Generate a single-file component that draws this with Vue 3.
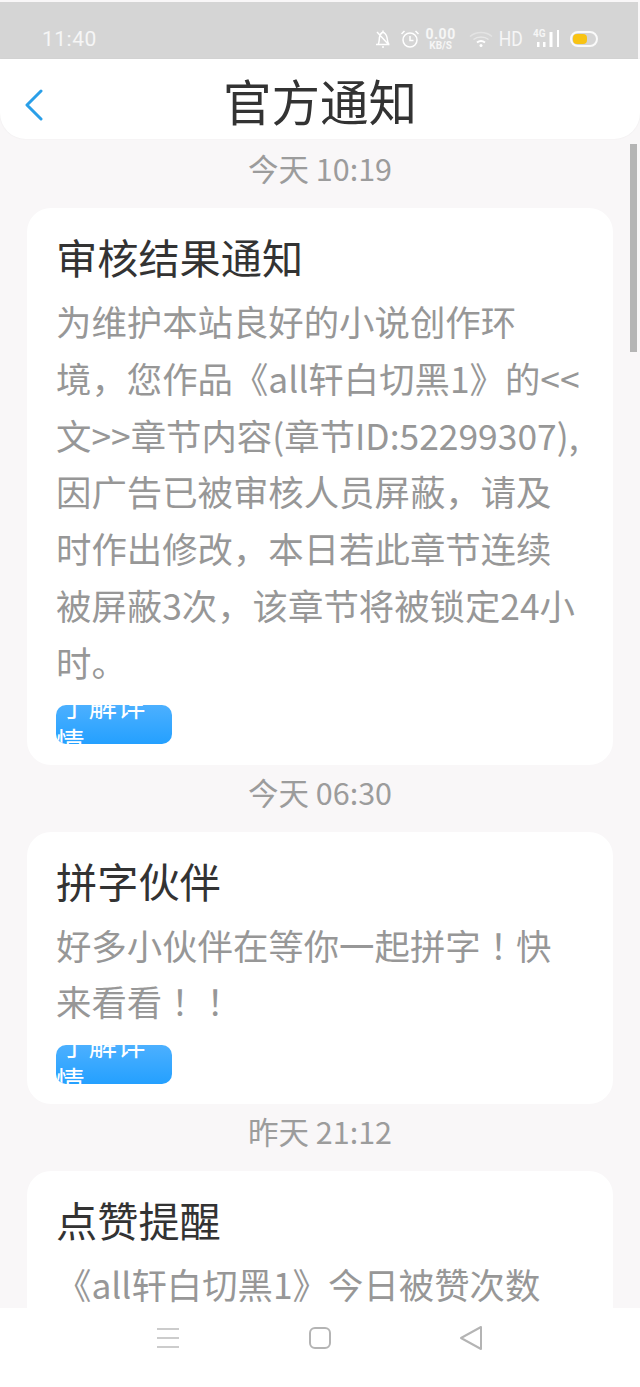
<script setup>
const notices = [
  {
    time: '今天 10:19',
    title: '审核结果通知',
    lines: ['为维护本站良好的小说创作环', '境，您作品《all轩白切黑1》的<<', '文>>章节内容(章节ID:52299307),', '因广告已被审核人员屏蔽，请及', '时作出修改，本日若此章节连续', '被屏蔽3次，该章节将被锁定24小', '时。'],
    button: true,
    centeredMarks: false
  },
  {
    time: '今天 06:30',
    title: '拼字伙伴',
    lines: ['好多小伙伴在等你一起拼字！快', '来看看！！'],
    button: true,
    centeredMarks: true
  },
  {
    time: '昨天 21:12',
    title: '点赞提醒',
    lines: ['《all轩白切黑1》今日被赞次数', '已达到上限'],
    button: false,
    centeredMarks: false
  }
]
</script>

<template>
  <div class="phone">
    <div class="status">
      <span class="clock">11:40</span>
      <div class="status-icons">
        <svg class="bell" width="18" height="20" viewBox="0 0 18 20" fill="none" stroke="#fff" stroke-width="1.500">
          <path d="M2 15.500h13.500M4 15.500c1.500-2 1-4.500 1.500-7C6 5 8 3.500 9 3.500s3.500 1.500 4 5c.3 2.500.5 5 2 7M3 3l12 13" />
          <path d="M9 1.500v2M8 18h2" />
        </svg>
        <svg width="20" height="20" viewBox="0 0 20 20" fill="none" stroke="#fff" stroke-width="1.500">
          <circle cx="10" cy="11" r="7" />
          <path d="M10 7v4.500h3.500M1.500 5l3-3M18.500 5l-3-3" />
        </svg>
        <div class="speed"><b>0.00</b><i>KB/S</i></div>
        <svg class="wifi" width="24" height="18" viewBox="0 0 24 18" fill="none" stroke="#ececec">
          <path d="M1 6.500C7 1.200 17 1.200 23 6.500" stroke-width="1.500" opacity=".6" />
          <path d="M4.500 9.500c4-3.500 11-3.500 15 0" stroke-width="1.500" opacity=".75" />
          <path d="M8 12.500c2.300-1.700 5.700-1.700 8 0" stroke="#fff" stroke-width="2" />
          <circle cx="12" cy="15.500" r="1.500" fill="#fff" stroke="none" />
        </svg>
        <span class="hd">HD</span>
        <div class="signal">
          <span class="g4">4G</span>
          <svg width="26" height="20" viewBox="0 0 26 20" fill="#fff">
            <rect x="4" y="13" width="2.500" height="5" />
            <rect x="10" y="13" width="2.500" height="5" />
            <rect x="16.500" y="3" width="3" height="15" />
            <rect x="24" y="1" width="2.500" height="17" />
          </svg>
        </div>
        <div class="battery"><span></span></div>
      </div>
    </div>

    <header class="topbar">
      <svg class="back" width="20" height="32" viewBox="0 0 20 32" fill="none" stroke="#2a9fe8" stroke-width="3" stroke-linecap="round" stroke-linejoin="round">
        <path d="M17 2 3 16l14 14" />
      </svg>
      <h1>官方通知</h1>
    </header>

    <main class="list">
      <section v-for="n in notices" :key="n.time" class="notice">
        <div class="time">{{ n.time }}</div>
        <article class="card">
          <h2>{{ n.title }}</h2>
          <p v-for="line in n.lines" :key="line" :class="{ marks: n.centeredMarks }">{{ line }}</p>
          <div v-if="n.button" class="detail"><div class="detail-text">了解详情</div></div>
        </article>
      </section>
    </main>

    <div class="scrollbar"></div>

    <nav class="navbar">
      <svg width="22" height="22" viewBox="0 0 22 22" fill="none" stroke="#bcbcbc" stroke-width="1.500">
        <path d="M0 2h22M0 11h22M0 20h22" />
      </svg>
      <svg width="22" height="22" viewBox="0 0 22 22" fill="none" stroke="#b4b4b4" stroke-width="2">
        <rect x="1" y="1" width="20" height="20" rx="5" />
      </svg>
      <svg width="22" height="26" viewBox="0 0 22 26" fill="none" stroke="#b4b4b4" stroke-width="2" stroke-linejoin="round">
        <path d="M21 2v22L1 13z" />
      </svg>
    </nav>
  </div>
</template>

<style>
html, body { margin: 0; background: #f9f7f8; }
</style>

<style scoped>
.phone {
  position: relative;
  width: 640px;
  height: 1387px;
  overflow: hidden;
  background: #f9f7f8;
  font-family: "Noto Sans CJK SC", sans-serif;
}
.status {
  height: 57px;
  margin-top: 2px;
  margin-right: 2px;
  background: #d5d5d5;
  display: flex;
  align-items: center;
  justify-content: space-between;
  box-sizing: border-box;
  padding: 17px 40px 0 42px;
  color: #f6f6f6;
}
.clock { font: 21px Roboto, sans-serif; letter-spacing: .5px; }
.status-icons { display: flex; align-items: center; gap: 5px; }
.bell { margin-right: 3px; }
.speed { display: flex; flex-direction: column; align-items: center; width: 28px; margin: 0 9px 0 2px; font-family: Roboto, sans-serif; line-height: 1; }
.speed b { font-size: 14px; letter-spacing: .5px; }
.speed i { font-size: 10px; font-style: normal; font-weight: 700; }
.hd { font: 20px Roboto, sans-serif; transform: scaleX(.88); margin: 0 1px 0 -1px; }
.signal { position: relative; width: 28px; height: 20px; margin-left: 3px; }
.signal svg { position: absolute; left: 0; top: 0; }
.g4 { position: absolute; left: 0; top: -1px; font: 700 10px Roboto, sans-serif; }
.battery { width: 28px; height: 16px; border: 2px solid #fafafa; border-radius: 8px; margin-left: 4px; padding: 1px; box-sizing: border-box; }
.battery span { display: block; width: 14px; height: 100%; border-radius: 4px; background: #f8c313; }
.topbar {
  height: 80px;
  background: #fff;
  border-radius: 0 0 26px 26px;
  display: flex;
  align-items: center;
  justify-content: center;
  position: relative;
  box-shadow: 0 0 2px rgba(0, 0, 0, .06);
  box-sizing: border-box;
  padding-top: 3px;
}
.topbar h1 { margin: 0; font-size: 48.500px; font-weight: 400; color: #333; line-height: 1; }
.back { position: absolute; left: 24px; top: 30px; }
.list { display: flex; flex-direction: column; padding: 2px 27px 0; }
.notice { display: flex; flex-direction: column; }
.time { height: 67px; display: flex; justify-content: center; padding-top: 8px; box-sizing: border-box; font-size: 30.500px; line-height: 38px; color: #9c9c9c; }
.card {
  background: #fff;
  border-radius: 24px;
  padding: 19px 30px 20.500px;
}
.card h2 { margin: 0 0 8px -1px; font-size: 41.200px; font-weight: 400; line-height: 58px; color: #333; }
.card p { margin: 0 0 0 -1px; font-size: 35.400px; line-height: 56.800px; color: #979797; white-space: nowrap; }
.card p.marks { font-family: "Noto Sans CJK TC", sans-serif; }
.detail {
  width: 116px;
  height: 39px;
  margin: 14.500px 0 0 -1px;
  overflow: hidden;
  border-radius: 10px;
  background: linear-gradient(#4cb0ff, #24a0ff);
  color: #fff;
  font-size: 28.500px;
  line-height: 36px;
}
.detail-text { margin-top: -18.500px; text-indent: 4px; word-break: break-all; }
.scrollbar { position: absolute; left: 630px; top: 144px; width: 7px; height: 208px; background: #b5b5b5; }
.navbar {
  position: absolute;
  left: 0;
  right: 0;
  bottom: 0;
  height: 79px;
  background: #fff;
  box-sizing: border-box;
  padding: 0 158px 20px 157px;
  display: flex;
  align-items: center;
  justify-content: space-between;
}
</style>
